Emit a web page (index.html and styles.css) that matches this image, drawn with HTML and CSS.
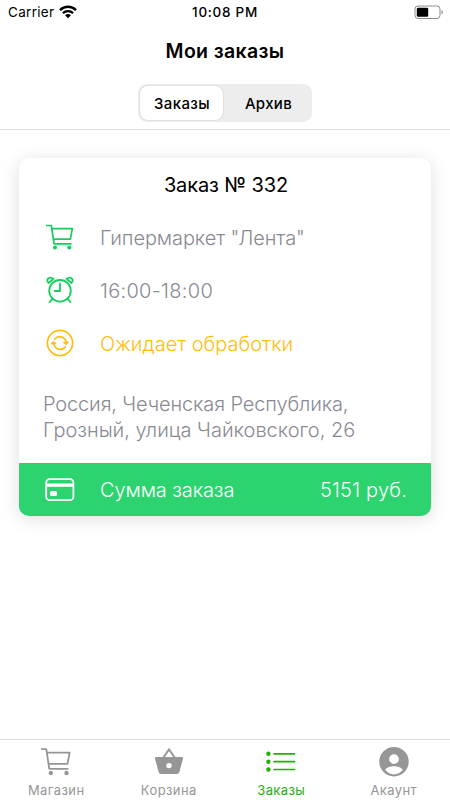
FILE: index.html
```html
<!DOCTYPE html>
<html lang="ru">
<head>
<meta charset="utf-8">
<title>Мои заказы</title>
<link rel="stylesheet" href="styles.css">
</head>
<body>
<div class="app">
  <header class="header">
    <div class="status">
      <div class="carrier"><span>Carrier</span>
        <svg class="wifi" width="18" height="14" viewBox="0 0 18 14" fill="none" stroke="#000" stroke-width="2.3"><path d="M1 5.1C5.5.6 12.500.6 17 5.100M3.900 8.100c2.900-2.700 7.300-2.700 10.200 0"/><path d="M6.100 10.200c1.700-1.500 4.100-1.500 5.800 0L9 13.200z" fill="#000" stroke="none"/></svg>
      </div>
      <div class="clock">10:08 PM</div>
      <svg class="battery" width="30" height="15" viewBox="0 0 30 15"><rect x="1" y="1" width="25" height="12.500" rx="3" fill="#fff" stroke="#8d8d8d"/><rect x="2.800" y="2.800" width="11.400" height="9" rx="1.300"/><path d="M27.500 5q1.500.5 1.500 2.200t-1.500 2.200z" fill="#999"/></svg>
    </div>
    <h1 class="title">Мои заказы</h1>
    <div class="segments">
      <div class="segment segment-active">Заказы</div>
      <div class="segment">Архив</div>
    </div>
  </header>
  <main class="content">
    <section class="card">
      <h2 class="card-title">Заказ № 332</h2>
      <div class="row">
        <svg class="icon" viewBox="0 0 28 28" fill="none" stroke="#13ce5c" stroke-width="1.700"><path d="M0 2.500h5.300l2.800 18.300h17.400M6 5.600h20.300l-1.900 10.600H7.300" stroke-linejoin="round"/><circle cx="9" cy="24.500" r="2" fill="#13ce5c" stroke="none"/><circle cx="23.300" cy="24.500" r="2" fill="#13ce5c" stroke="none"/></svg>
        <span class="store">Гипермаркет "Лента"</span>
      </div>
      <div class="row">
        <svg class="icon" viewBox="0 0 28 28" fill="none" stroke="#13ce5c" stroke-width="1.800" stroke-linecap="round" stroke-linejoin="round"><circle cx="14" cy="14.800" r="10.800"/><path d="M14 7.500v7.500H8.800M6.500 22.800 3.500 26M21.500 22.800l3 3.200M2.500 7C-1 2.500 4.300.2 7.500 3zM25.500 7C29 2.500 23.700.2 20.500 3z"/></svg>
        <span class="time">16:00-18:00</span>
      </div>
      <div class="row row-pending">
        <svg class="icon" viewBox="0 0 28 28" fill="none" stroke="#ffbd10" stroke-width="1.700" stroke-linecap="round"><circle cx="14" cy="14" r="12.600"/><path d="M8.800 10c3.200-4 10-2.800 11.400 3M19.200 18c-3.200 4-10 2.800-11.400-3"/><path d="M17.800 13.200h5l-2.500 2.300zM5.200 14.800h5l-2.500-2.300z" fill="#ffbd10" stroke-width="1" stroke-linejoin="round"/></svg>
        <span class="state">Ожидает обработки</span>
      </div>
      <p class="address"><span class="address-city">Россия, Чеченская Республика,</span><br><span class="address-street">Грозный, улица Чайковского, 26</span></p>
      <div class="total">
        <svg class="icon icon-card" width="30" height="24" viewBox="0 0 30 24"><rect x="1.200" y="1.200" width="27.200" height="21" rx="3.500" fill="none" stroke="#fff" stroke-width="1.800"/><path d="M1 5.500h27.600v3.300H1z" fill="#fff"/><rect x="5" y="13" width="7" height="5" rx="1.500" fill="#fff"/></svg>
        <span class="total-label">Сумма заказа</span>
        <span class="sum">5151 руб.</span>
      </div>
    </section>
  </main>
  <nav class="tabs">
    <div class="tab">
      <svg width="32" height="32" viewBox="0 0 32 32" fill="none" stroke="#969696" stroke-width="1.800"><path d="M1 3.200h5.300l3 19.700h19.200M7 6.600h22.600l-2.100 11.300H8.600" stroke-linejoin="round"/><circle cx="10.800" cy="27" r="2.200" fill="#969696" stroke="none"/><circle cx="26.500" cy="27" r="2.200" fill="#969696" stroke="none"/></svg>
      <span>Магазин</span>
    </div>
    <div class="tab">
      <svg width="32" height="32" viewBox="0 0 32 32"><path d="m10 12 6-8.500 6 8.500" fill="none" stroke="#969696" stroke-width="2"/><path fill="#969696" fill-rule="evenodd" d="M3.500 11h25q1.800 0 1.500 1.800l-3.700 13.400q-.5 1.800-2.500 1.800H8.200q-2 0-2.500-1.800L2 12.800Q1.700 11 3.500 11M16 16.900a2.700 2.700 0 1 0 0 5.400 2.700 2.700 0 1 0 0-5.400"/></svg>
      <span>Корзина</span>
    </div>
    <div class="tab tab-active">
      <svg width="32" height="32" viewBox="0 0 32 32" fill="#23b00b"><circle cx="3.400" cy="7.800" r="2.200"/><circle cx="3.400" cy="15.700" r="2.200"/><circle cx="3.400" cy="23.500" r="2.200"/><path d="M9 7.800h20.500M9 15.700h20.500M9 23.500h20.500" stroke="#23b00b" stroke-width="1.700" stroke-linecap="round"/></svg>
      <span>Заказы</span>
    </div>
    <div class="tab">
      <svg width="32" height="32" viewBox="0 0 32 32"><path fill="#969696" fill-rule="evenodd" d="M16 1a14.700 14.700 0 1 0 0 29.400A14.700 14.700 0 1 0 16 1m0 7.200a4.900 4.900 0 1 1 0 9.800 4.900 4.900 0 1 1 0-9.800M7.300 24.100c2-5 15.400-5 17.400 0-4.300 5.700-13.100 5.700-17.400 0"/></svg>
      <span>Акаунт</span>
    </div>
  </nav>
</div>
</body>
</html>
```
FILE: styles.css
```css
* {
  box-sizing: border-box;
}

body {
  margin: 0;
  background: #fff;
  color: #000;
  font-family: Inter, "Noto Sans", sans-serif;
  white-space: nowrap;
}

.app {
  width: 450px;
  height: 800px;
  display: flex;
  flex-direction: column;
  overflow: hidden;
}

.header {
  height: 130px;
  flex: none;
  border-bottom: 1px solid #dedede;
}

.status {
  height: 24px;
  display: grid;
  grid-template-columns: 1fr auto 1fr;
  align-items: center;
  padding: 0 6px 0 8px;
  font-size: 13.5px;
}

.carrier {
  display: flex;
  align-items: center;
  gap: 5px;
  letter-spacing: 0.3px;
}

.clock {
  font-weight: 500;
  letter-spacing: 0.7px;
  margin-left: -2px;
}

.battery {
  justify-self: end;
}

.title {
  margin: 13px 0 0;
  text-align: center;
  font-size: 19.5px;
  font-weight: 600;
  line-height: 28px;
  letter-spacing: 0.35px;
}

.segments {
  width: 174px;
  height: 38px;
  margin: 19px auto 0;
  padding: 2px;
  display: flex;
  border-radius: 9px;
  background: #ededed;
}

.segment {
  flex: 1;
  display: flex;
  align-items: center;
  justify-content: center;
  padding-left: 4px;
  font-size: 15px;
  font-weight: 500;
  letter-spacing: 0.35px;
}

.segment-active {
  flex: 0 0 83px;
  padding-left: 1px;
  border-radius: 8px;
  background: #fff;
  box-shadow: 0 0 2px rgba(0, 0, 0, 0.18);
}

.content {
  flex: 1;
  padding: 28px 19px 0;
}

.card {
  height: 358px;
  display: flex;
  flex-direction: column;
  border-radius: 10px;
  background: #fff;
  box-shadow: 0 3px 18px rgba(0, 0, 0, 0.13);
  font-size: 20px;
  font-weight: 300;
}

.card-title {
  height: 53px;
  margin: 0;
  padding-left: 2px;
  text-align: center;
  font-size: 20px;
  font-weight: 400;
  line-height: 55px;
  letter-spacing: -0.12px;
}

.row {
  height: 53px;
  display: flex;
  align-items: center;
  gap: 26.5px;
  padding-left: 26.5px;
  color: #8a8a93;
}

.row-pending {
  color: #ffbd10;
}

.icon {
  width: 28px;
  height: 28px;
  flex: none;
}

.row .icon {
  margin-bottom: 2px;
}

.store {
  letter-spacing: -0.1px;
}

.time {
  letter-spacing: 0.3px;
}

.address {
  margin: 21px 0 0 24px;
  color: #8a8a93;
  line-height: 26px;
}

.address-city {
  letter-spacing: -0.14px;
}

.total {
  height: 53px;
  margin-top: auto;
  display: flex;
  align-items: center;
  padding: 0 24px 0 26px;
  border-radius: 0 0 10px 10px;
  background: #2dd36f;
  color: #fff;
}

.icon-card {
  width: 30px;
  height: 24px;
  margin-right: 25px;
}

.total-label {
  letter-spacing: -0.1px;
}

.sum {
  margin-left: auto;
  letter-spacing: 0.2px;
}

.tabs {
  height: 61px;
  flex: none;
  display: grid;
  grid-template-columns: repeat(4, 1fr);
  border-top: 1px solid #dedede;
}

.tab {
  display: flex;
  flex-direction: column;
  align-items: center;
  padding-top: 6px;
  color: #969696;
  font-size: 13px;
  line-height: 24px;
  letter-spacing: 0.4px;
}

.tab-active {
  color: #23b00b;
}
```
